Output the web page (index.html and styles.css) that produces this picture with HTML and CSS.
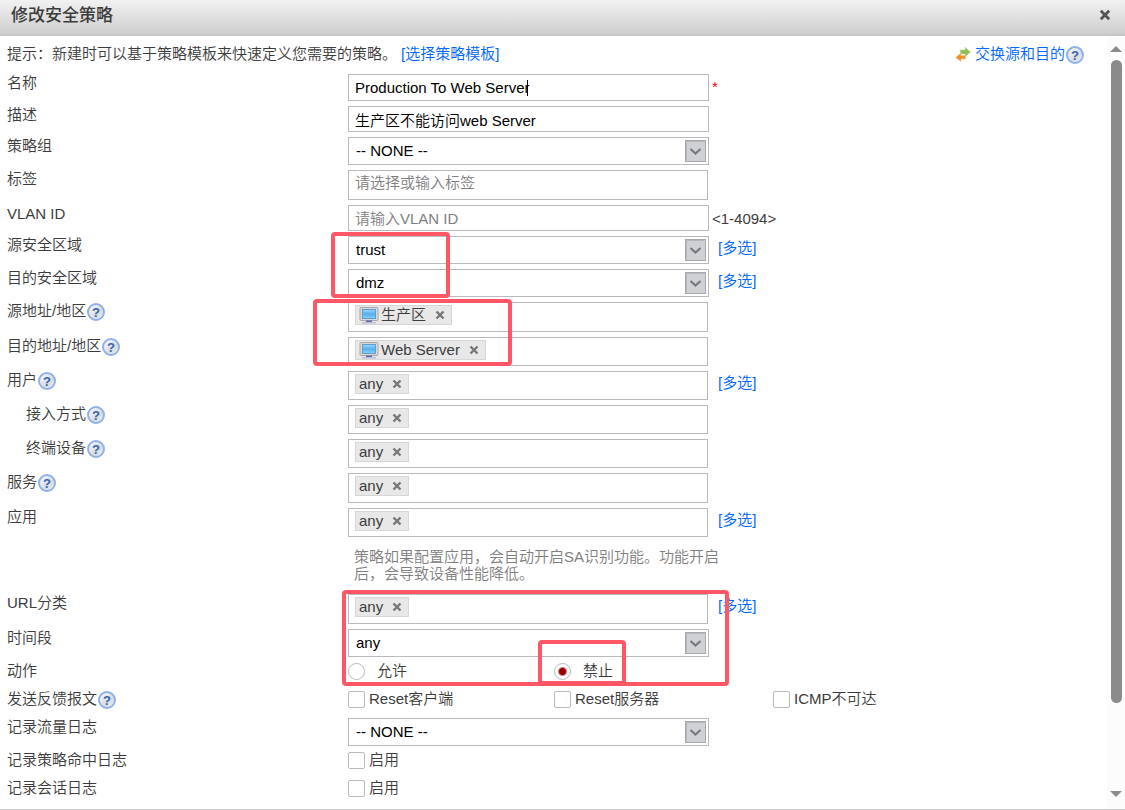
FILE: index.html
```html
<!DOCTYPE html>
<html lang="zh-CN">
<head>
    <meta charset="UTF-8">
    <meta name="viewport" content="width=device-width, initial-scale=1.0">
    <title>修改安全策略</title>
    <link rel="stylesheet" href="styles.css">
</head>
<body>
    <!-- shared icons -->
    <svg class="sprite" aria-hidden="true">
        <defs>
            <linearGradient id="helpFill" x1="0" y1="0" x2="1" y2="1">
                <stop offset="0" stop-color="#ffffff"/>
                <stop offset="0.6" stop-color="#d8dade"/>
                <stop offset="1" stop-color="#f6f7f9"/>
            </linearGradient>
            <linearGradient id="screenFill" x1="0" y1="0" x2="0" y2="1">
                <stop offset="0" stop-color="#a4d6f8"/>
                <stop offset="0.5" stop-color="#58aeea"/>
                <stop offset="1" stop-color="#8ad2f6"/>
            </linearGradient>
        </defs>
        <symbol id="help" viewBox="0 0 18 18">
            <circle cx="9" cy="9" r="8" fill="url(#helpFill)" stroke="#8fb1ea" stroke-width="2"/>
            <text x="9" y="14" text-anchor="middle" font-family="Liberation Sans, sans-serif" font-size="13" font-weight="bold" fill="#3465b0">?</text>
        </symbol>
        <symbol id="host" viewBox="0 0 20 17">
            <rect x="1" y="0.5" width="18" height="13" rx="1" fill="#d9d9d9" stroke="#a8a8a8"/>
            <rect x="3.5" y="2.5" width="13" height="9" fill="url(#screenFill)" stroke="#5a9fd2"/>
            <path d="M7 13.5h6v2H7z" fill="#6565a5"/>
            <path d="M3 15h14v1.5H3z" fill="#bcbcd6"/>
        </symbol>
        <symbol id="close" viewBox="0 0 10 10">
            <path d="M1.5 1.5l7 7M8.5 1.5l-7 7" stroke="currentColor" stroke-width="2.4" fill="none"/>
        </symbol>
        <symbol id="down" viewBox="0 0 21 22">
            <rect x="0.5" y="0.5" width="20" height="21" fill="#d0d1d4" stroke="#a6a8ae"/>
            <path d="M1.5 20.5V1.5H19.5" stroke="#b6b8be" fill="none"/>
            <path d="M5.5 9l5 4.500 5-4.500" stroke="#77797d" stroke-width="2.2" fill="none"/>
        </symbol>
    </svg>

    <header class="title-bar">
        <h1>修改安全策略</h1>
        <button class="close" type="button" aria-label="关闭"><svg><use href="#close"/></svg></button>
    </header>

    <div class="dialog-body">
        <form class="policy">
            <div class="tip">
                <span>提示：新建时可以基于策略模板来快速定义您需要的策略。</span>
                <a href="#">[选择策略模板]</a>
                <a class="swap" href="#">
                    <svg viewBox="0 0 16 16" aria-hidden="true">
                        <path d="M5 4h5V1.500L15.500 6 10 10.500V8H6z" fill="#8fbe52" stroke="#b7d68f" stroke-width="0.6"/>
                        <path d="M10.500 9.500H6V7L0.500 11.500 6 15.500V13h4.500z" fill="#f0922c" stroke="#f8c68d" stroke-width="0.6"/>
                    </svg>交换源和目的</a>
                <svg class="help"><use href="#help"/></svg>
            </div>

            <div class="row required">
                <label for="name">名称</label>
                <div class="field">
                    <input class="text" id="name" type="text" value="Production To Web Server">
                    <span class="caret"></span>
                </div>
                <span class="star">*</span>
            </div>
            <div class="row">
                <label for="desc">描述</label>
                <div class="field"><input class="text" id="desc" type="text" value="生产区不能访问web Server"></div>
            </div>
            <div class="row">
                <label for="group">策略组</label>
                <div class="field">
                    <select id="group"><option>-- NONE --</option></select>
                    <svg class="down"><use href="#down"/></svg>
                </div>
            </div>
            <div class="row">
                <label for="tag">标签</label>
                <div class="field"><input class="text tag-input" id="tag" type="text" placeholder="请选择或输入标签"></div>
            </div>
            <div class="row">
                <label for="vlan">VLAN ID</label>
                <div class="field"><input class="text" id="vlan" type="text" placeholder="请输入VLAN ID"></div>
                <span class="range">&lt;1-4094&gt;</span>
            </div>

            <div class="group">
                <div class="row">
                    <label for="srcZone">源安全区域</label>
                    <div class="field">
                        <select id="srcZone"><option>trust</option></select>
                        <svg class="down"><use href="#down"/></svg>
                    </div>
                    <a class="multi" href="#">[多选]</a>
                </div>
                <div class="row">
                    <label for="dstZone">目的安全区域</label>
                    <div class="field">
                        <select id="dstZone"><option>dmz</option></select>
                        <svg class="down"><use href="#down"/></svg>
                    </div>
                    <a class="multi" href="#">[多选]</a>
                </div>
                <div class="mark mark-zone"></div>
            </div>

            <div class="group">
                <div class="row">
                    <div class="label">源地址/地区<svg class="help"><use href="#help"/></svg></div>
                    <div class="field tags tall">
                        <span class="tag"><svg class="host"><use href="#host"/></svg>生产区<button type="button" aria-label="删除"><svg><use href="#close"/></svg></button></span>
                    </div>
                </div>
                <div class="row">
                    <div class="label">目的地址/地区<svg class="help"><use href="#help"/></svg></div>
                    <div class="field tags">
                        <span class="tag"><svg class="host"><use href="#host"/></svg>Web Server<button type="button" aria-label="删除"><svg><use href="#close"/></svg></button></span>
                    </div>
                </div>
                <div class="mark mark-address"></div>
            </div>

            <div class="row">
                <div class="label">用户<svg class="help"><use href="#help"/></svg></div>
                <div class="field tags">
                    <span class="tag">any<button type="button" aria-label="删除"><svg><use href="#close"/></svg></button></span>
                </div>
                <a class="multi" href="#">[多选]</a>
            </div>
            <div class="row">
                <div class="label sub">接入方式<svg class="help"><use href="#help"/></svg></div>
                <div class="field tags">
                    <span class="tag">any<button type="button" aria-label="删除"><svg><use href="#close"/></svg></button></span>
                </div>
            </div>
            <div class="row">
                <div class="label sub">终端设备<svg class="help"><use href="#help"/></svg></div>
                <div class="field tags">
                    <span class="tag">any<button type="button" aria-label="删除"><svg><use href="#close"/></svg></button></span>
                </div>
            </div>
            <div class="row">
                <div class="label">服务<svg class="help"><use href="#help"/></svg></div>
                <div class="field tags tall">
                    <span class="tag">any<button type="button" aria-label="删除"><svg><use href="#close"/></svg></button></span>
                </div>
            </div>
            <div class="row">
                <div class="label">应用</div>
                <div class="field tags">
                    <span class="tag">any<button type="button" aria-label="删除"><svg><use href="#close"/></svg></button></span>
                </div>
                <a class="multi" href="#">[多选]</a>
                <p class="note">策略如果配置应用，会自动开启SA识别功能。功能开启后，会导致设备性能降低。</p>
            </div>

            <div class="group">
                <div class="row">
                    <div class="label">URL分类</div>
                    <div class="field tags tall">
                        <span class="tag">any<button type="button" aria-label="删除"><svg><use href="#close"/></svg></button></span>
                    </div>
                    <a class="multi" href="#">[多选]</a>
                </div>
                <div class="row">
                    <label for="time">时间段</label>
                    <div class="field">
                        <select id="time"><option>any</option></select>
                        <svg class="down"><use href="#down"/></svg>
                    </div>
                </div>
                <div class="row">
                    <div class="label">动作</div>
                    <div class="choices">
                        <label class="radio"><input type="radio" name="action">允许</label>
                        <label class="radio"><input type="radio" name="action" checked>禁止</label>
                    </div>
                </div>
                <div class="mark mark-rule"></div>
                <div class="mark mark-deny"></div>
            </div>

            <div class="row">
                <div class="label">发送反馈报文<svg class="help"><use href="#help"/></svg></div>
                <div class="choices">
                    <label><input type="checkbox">Reset客户端</label>
                    <label><input type="checkbox">Reset服务器</label>
                    <label><input type="checkbox">ICMP不可达</label>
                </div>
            </div>
            <div class="row">
                <label for="flowLog">记录流量日志</label>
                <div class="field">
                    <select id="flowLog"><option>-- NONE --</option></select>
                    <svg class="down"><use href="#down"/></svg>
                </div>
            </div>
            <div class="row">
                <div class="label">记录策略命中日志</div>
                <div class="choices"><label><input type="checkbox">启用</label></div>
            </div>
            <div class="row">
                <div class="label">记录会话日志</div>
                <div class="choices"><label><input type="checkbox">启用</label></div>
            </div>
        </form>

        <div class="scrollbar" aria-hidden="true">
            <div class="arrow-up"></div>
            <div class="track"><div class="thumb"></div></div>
            <div class="arrow-down"></div>
        </div>
    </div>
</body>
</html>
```
FILE: styles.css
```css
* {
    box-sizing: border-box;
}
body {
    margin: 0;
    min-height: 100vh;
    display: flex;
    flex-direction: column;
    background: #fff;
    border-bottom: 1px solid #c8c8c8;
    color: #3c3c3c;
    font-family: "Liberation Sans", "Noto Sans CJK SC", sans-serif;
    font-size: 15px;
    font-weight: 350;
    line-height: 18px;
}
a {
    color: #06f;
    text-decoration: none;
}
input,
select,
button {
    font: inherit;
    margin: 0;
}
.sprite {
    position: absolute;
    width: 0;
    height: 0;
}

/* title bar */
.title-bar {
    display: flex;
    align-items: center;
    justify-content: space-between;
    height: 36px;
    padding: 0 14px 4px 11px;
    background: linear-gradient(#f2f2f2, #cecece);
    border-bottom: 2px solid #c6c6c6;
}
.title-bar h1 {
    margin: 0;
    padding-top: 2px;
    font-size: 17px;
    font-weight: 500;
    line-height: 26px;
}
.close {
    width: 12px;
    height: 12px;
    padding: 0;
    border: 0;
    background: none;
    color: #555;
}
.close svg {
    display: block;
    width: 12px;
    height: 12px;
}

.dialog-body {
    flex: 1;
    display: flex;
}
.policy {
    flex: 1;
    padding: 9px 0 0 7px;
}
.tip {
    display: flex;
    align-items: center;
    gap: 4px;
    height: 18px;
    padding-right: 23px;
    margin-bottom: 11px;
}
.swap {
    display: flex;
    align-items: center;
    gap: 4px;
    margin-left: auto;
}
.swap svg {
    width: 16px;
    height: 16px;
}
.help {
    width: 18px;
    height: 18px;
    flex: none;
    margin: 2px 0 0 1px;
}
.tip .help {
    margin-left: -3px;
}

/* form rows */
.row {
    display: grid;
    grid-template-columns: 31% 361px 1fr;
    align-items: start;
    padding-bottom: 5px;
}
.label {
    display: flex;
    align-items: center;
    height: 18px;
}
.sub {
    padding-left: 19px;
}
.field {
    position: relative;
}
.text,
select {
    display: block;
    width: 100%;
    height: 26px;
    padding: 0 6px;
    border: 1px solid #b9b9bf;
    border-radius: 0;
    background: #fff;
    color: #000;
    outline: none;
}
.required .text {
    height: 27px;
}
.text::placeholder {
    color: #808080;
    opacity: 1;
}
.text.tag-input {
    width: 360px;
    height: 30px;
    padding-bottom: 5px;
}
select {
    height: 28px;
    padding: 0 7px;
    appearance: none;
}
.down {
    position: absolute;
    top: 3px;
    right: 3px;
    width: 21px;
    height: 22px;
    pointer-events: none;
}
.caret {
    position: absolute;
    top: 6px;
    left: 179px;
    width: 1px;
    height: 16px;
    background: #000;
}
.star {
    padding: 4px 0 0 3px;
    color: #f00;
}
.range {
    padding: 5px 0 0 3px;
}
.multi {
    padding: 3px 0 0 9px;
}

/* tag boxes */
.tags {
    display: flex;
    align-items: flex-start;
    width: 360px;
    height: 29px;
    padding: 2px 6px;
    border: 1px solid #b9b9bf;
}
.tags.tall {
    height: 30px;
}
.tag {
    display: flex;
    align-items: center;
    height: 20px;
    padding: 0 6px 0 3px;
    border: 1px solid #d6d6d6;
    background: #e8e8e8;
}
.tag button {
    width: 10px;
    height: 10px;
    margin-left: 9px;
    padding: 0;
    border: 0;
    background: none;
    color: #777;
}
.tag button svg {
    display: block;
    width: 10px;
    height: 10px;
}
.host {
    width: 20px;
    height: 17px;
    margin-right: 2px;
}
.note {
    grid-column: 2 / 4;
    max-width: 376px;
    margin: 0;
    padding: 11px 0 7px 6px;
    color: #808080;
    line-height: 17px;
}

/* radios and checkboxes */
.choices {
    grid-column: 2 / 4;
    display: grid;
    grid-template-columns: 206px 219px auto;
    height: 23px;
}
.choices label {
    display: flex;
    align-items: center;
    gap: 4px;
    height: 18px;
}
.choices .radio {
    gap: 12px;
}
.choices input {
    appearance: none;
    width: 17px;
    height: 17px;
    border: 1px solid #b9b9bf;
    border-radius: 2px;
    background: #fff;
}
.choices input[type="radio"] {
    border-radius: 50%;
}
.choices input[type="radio"]:checked {
    background: radial-gradient(circle, #900 0 3px, #fff 5px);
}

/* red highlight boxes */
.group {
    position: relative;
}
.mark {
    position: absolute;
    border: 4px solid #ff5766;
    border-radius: 4px;
    pointer-events: none;
}
.mark-zone {
    top: -4px;
    left: calc(31% - 17px);
    width: 119px;
    height: 66px;
}
.mark-address {
    top: -3px;
    left: calc(31% - 35px);
    width: 199px;
    height: 67px;
}
.mark-rule {
    top: -4px;
    left: calc(31% - 6px);
    width: 387px;
    height: 96px;
}
.mark-deny {
    top: 46px;
    left: calc(31% + 190px);
    width: 88px;
    height: 45px;
}

/* scrollbar */
.scrollbar {
    display: flex;
    flex-direction: column;
    align-items: center;
    width: 18px;
    padding: 10px 0 12px;
    background: #fcfcfc;
}
.track {
    flex: 1;
    width: 11px;
    margin: 8px 0;
}
.thumb {
    height: 89%;
    border-radius: 6px;
    background: #8b8b8b;
}
.arrow-up,
.arrow-down {
    border: 6px solid transparent;
}
.arrow-up {
    border-top: 0;
    border-bottom-color: #8b8b8b;
}
.arrow-down {
    border-bottom: 0;
    border-top-color: #8b8b8b;
}
```
